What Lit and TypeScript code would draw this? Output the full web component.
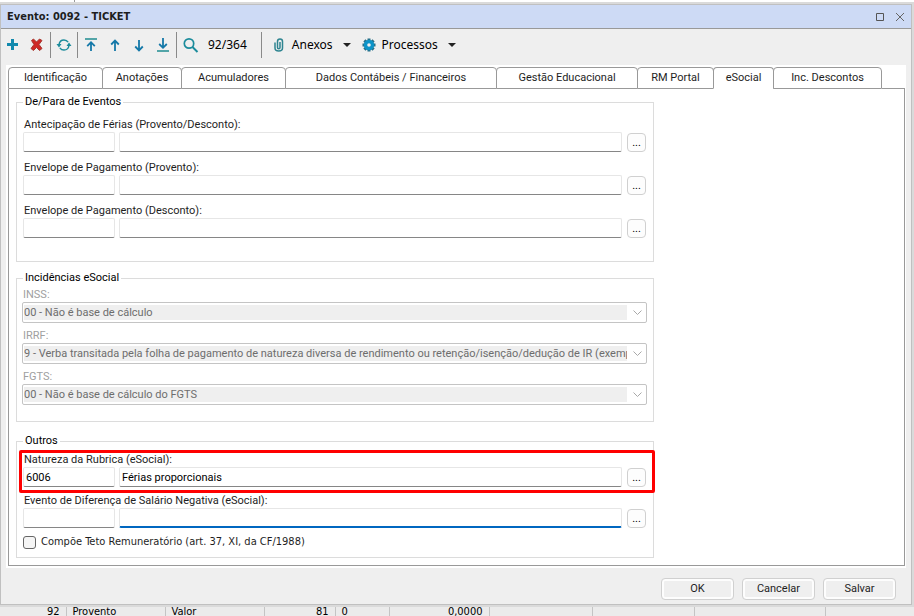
import { LitElement, html, css, svg } from "lit";
import { customElement } from "lit/decorators.js";

const icons = {
  add: svg`<path d="M6.5 1v11M1 6.5h11" stroke="#1289ad" stroke-width="3" fill="none"/>`,
  remove: svg`<path d="M1.5 2.5 3.5 1 6.5 4 9.5 1 12 2.5 9 6.5 12 10.5 9.5 12.5 6.5 9.5 3.5 12.5 1 10.5 4 6.5Z" fill="#cf2a27" stroke="#a83a32" stroke-width="1"/>`,
  refresh: svg`<path d="M2 6.5C2.500 3.500 4.500 2 7 2c1.700 0 3.200.8 4.100 2.200M12 7.500c-.5 3-2.500 4.500-5 4.500-1.700 0-3.200-.8-4.100-2.200" fill="none" stroke="#1c8c9c" stroke-width="1.500"/><path d="M-.5 6h5L2 9.500ZM9.500 8h5L12 4.500Z" fill="#1c8c9c"/>`,
  first: svg`<path d="M1 1h12" stroke="#2b9296" stroke-width="1.600"/><path d="M7 13V4.500M3.200 8.200 7 4.200l3.800 4" fill="none" stroke="#1478a8" stroke-width="1.800"/>`,
  up: svg`<path d="M7 13V3M3.200 6.500 7 2.600l3.800 3.900" fill="none" stroke="#1478a8" stroke-width="1.800"/>`,
  down: svg`<path d="M7 2v10M3.200 8.500 7 12.400l3.800-3.900" fill="none" stroke="#1478a8" stroke-width="1.800"/>`,
  last: svg`<path d="M1 13h12" stroke="#2b9296" stroke-width="1.600"/><path d="M7 0v9.500M3.200 6 7 9.800 10.800 6" fill="none" stroke="#1478a8" stroke-width="1.800"/>`,
  search: svg`<circle cx="6" cy="5.500" r="4.700" fill="none" stroke="#1c8c9c" stroke-width="1.700"/><path d="m9.500 9 5 5" stroke="#1c8c9c" stroke-width="2"/>`,
  clip: svg`<path d="M3 4.500V10c0 4 7.500 4 7.500 0V3.500c0-3.300-5-3.300-5 0V9.500c0 1.800 2.500 1.800 2.500 0V4" fill="none" stroke="#2f8591" stroke-width="1.500"/>`,
  gear: svg`<path d="M7 .5v13M.5 7h13M2.400 2.400l9.200 9.200M11.600 2.400l-9.200 9.200" stroke="#276f87" stroke-width="3"/><circle cx="7" cy="7" r="3.500" fill="#efefef" stroke="#0c93c8" stroke-width="3.400"/>`,
};

const icon = (name: keyof typeof icons) =>
  html`<svg class="icon" viewBox="0 0 14 14" aria-hidden="true">${icons[name]}</svg>`;

const tabs = [
  { label: "Identificação", cls: "t1" },
  { label: "Anotações", cls: "t2" },
  { label: "Acumuladores", cls: "t3" },
  { label: "Dados Contábeis / Financeiros", cls: "t4" },
  { label: "Gestão Educacional", cls: "t5" },
  { label: "RM Portal", cls: "t6" },
  { label: "eSocial", cls: "t7", active: true },
  { label: "Inc. Descontos", cls: "t8" },
];

@customElement("app-root")
export class AppRoot extends LitElement {
  static styles = css`
    :host {
      display: flex;
      flex-direction: column;
      min-height: 100vh;
      box-sizing: border-box;
      background: #dadada;
      font: 11px/14px Roboto, "Liberation Sans", sans-serif;
      color: #1e1e1e;
    }
    * { box-sizing: border-box; }
    button, input, select { font: inherit; color: inherit; margin: 0; }
    .above { height: 2px; background: #fff; display: flex; }
    .above::before { content: ""; width: 74px; border-right: 1px solid #999; }
    .window {
      margin: 2px 2px 0 0;
      border: 1px solid #c0c0c0;
      background: #efefef;
    }
    .title {
      display: flex;
      align-items: center;
      height: 24px;
      padding: 0 1px 0 6px;
      background: #cddaf5;
      border-bottom: 1px solid #999;
      font: bold 11px/14px "DejaVu Sans Condensed", "DejaVu Sans", sans-serif;
    }
    h1 { font: inherit; margin: 0; flex: 1; }
    .winbtn { width: 20px; height: 20px; padding: 0; border: 0; background: none; display: grid; place-items: center; }
    .winbtn svg { width: 10px; height: 10px; }
    .toolbar {
      display: flex;
      align-items: center;
      height: 36px;
      font: 12px/16px "Noto Sans", sans-serif;
      color: #000;
      padding: 0 0 4px;
    }
    .tool { height: 24px; width: 24px; padding: 0; border: 0; background: none; display: grid; place-items: center; }
    .menu { height: 24px; padding: 0 0 0 9px; border: 0; background: none; display: flex; align-items: center; gap: 6px; }
    .menu + .menu { padding-left: 11px; }
    .icon { width: 14px; height: 14px; overflow: visible; }
    .caret { width: 8px; height: 4px; margin-left: 4px; fill: #222; }
    .sep { width: 1px; height: 26px; background: #8a8a8a; margin: 0 1px; }
    .count { padding: 0 13px 0 6px; }
    .pages { background: #fff; margin: 0 5px; padding: 2px 1px 2px 2px; }
    .tabs { display: flex; }
    .tabs::after { content: ""; flex: 1; border-bottom: 1px solid #999; }
    .tab {
      height: 22px;
      padding: 0;
      border: 1px solid #999;
      border-radius: 4px 4px 0 0;
      background: #fff;
      margin-right: -1px;
      text-align: center;
    }
    .active { border-bottom-color: #fff; }
    .t1 { width: 95px; } .t2 { width: 80px; } .t3 { width: 105px; } .t4 { width: 212px; }
    .t5 { width: 142px; } .t6 { width: 77px; } .t7 { width: 61px; } .t8 { width: 109px; }
    .tabs::after { margin-left: 1px; }
    .panel { border: 1px solid #999; border-top: 0; padding: 6px 7px 7px; }
    fieldset {
      max-width: 638px;
      margin: 0 0 9px;
      padding: 9px 7px 0 6px;
      border: 1px solid #dcdcdc;
      min-width: 0;
    }
    legend { padding: 0 2px; margin: 0; color: #000; }
    .g1 { height: 167px; }
    .g2 { height: 151px; padding-top: 3px; margin-bottom: 12px; }
    .g3 { height: 124px; padding-top: 5px; margin-bottom: 0; }
    .field { display: grid; grid-template-columns: 92px 1fr 20px; column-gap: 4px; margin-bottom: 9px; }
    .field label { grid-column: 1 / -1; line-height: 14px; padding-left: 1px; }
    .g3 .field { margin-bottom: 7px; }
    .box {
      height: 20px;
      min-width: 0;
      width: 100%;
      padding: 0 2px;
      background: #fff;
      border: 1px solid #e6e6e6;
      border-bottom-color: #868686;
      border-radius: 2px;
      color: #000;
      outline: 0;
    }
    .focus { border-bottom: 2px solid #0067c0; }
    .more {
      width: 19px;
      height: 19px;
      justify-self: end;
      margin-top: 1px;
      padding: 0;
      border: 1px solid #d0d0d0;
      border-radius: 4px;
      background: #fdfdfd;
      color: #000;
    }
    .mark { position: relative; }
    .mark::after {
      content: "";
      position: absolute;
      inset: -3px -9px -6px -4px;
      border: 3px solid #f00;
      border-radius: 2px;
      pointer-events: none;
    }
    .choice { display: block; margin: 0 -1px 6px; color: #a0a0a0; }
    .choice label { display: block; padding-left: 1px; }
    .combo {
      display: flex;
      align-items: center;
      height: 21px;
      padding: 2px 2px 2px 1px;
      border: 1px solid #c4c4c4;
      border-radius: 2px;
      background: #fff;
    }
    .combo select {
      appearance: none;
      flex: 1;
      min-width: 0;
      height: 15px;
      padding: 0;
      border: 0;
      border-radius: 0;
      background: #efefef;
      color: #6d6d6d;
      opacity: 1;
    }
    .chev { width: 9px; height: 5px; margin: 0 2px 0 6px; fill: none; stroke: #a8a8a8; }
    .check { display: flex; align-items: center; gap: 5px; font: 11px/14px "DejaVu Sans Condensed", sans-serif; }
    .check input {
      appearance: none;
      width: 13px;
      height: 13px;
      border: 1px solid #666;
      border-radius: 3px;
      background: #f5f5f5;
    }
    .actions { display: flex; justify-content: flex-end; gap: 8px; padding: 10px 15px 4px; }
    .action {
      width: 73px;
      height: 22px;
      padding: 0;
      border: 1px solid #d0d0d0;
      border-radius: 4px;
      background: #efefef;
      box-shadow: inset 0 0 0 2px #fdfdfd;
    }
    table {
      margin-top: 2px;
      width: 100%;
      border-collapse: collapse;
      table-layout: fixed;
      background: #ebebeb;
      font: 11px/8px "DejaVu Sans Condensed", sans-serif;
      color: #000;
    }
    td { padding: 0 6px; height: 9px; border-right: 1px solid #c4c4c4; }
    td:last-child { border: 0; }
    .num { text-align: right; }
    .c1 { width: 66px; } .c2 { width: 99px; } .c3 { width: 99px; } .c4 { width: 71px; } .c5 { width: 54px; }
    .c6 { width: 100px; } .c7 { width: 103px; } .c8 { width: 102px; } .c9 { width: 131px; }
  `;

  private field(id: string, label: string, code = "", text = "", cls = "", focus = "") {
    return html`<div class="field ${cls}">
      <label for=${id}>${label}</label>
      <input class="box" id=${id} .value=${code} />
      <input class="box ${focus}" aria-label="${label} descrição" .value=${text} />
      <button class="more" aria-label="Procurar">...</button>
    </div>`;
  }

  private choice(id: string, label: string, value: string) {
    return html`<div class="choice">
      <label for=${id}>${label}</label>
      <div class="combo">
        <select id=${id} disabled><option>${value}</option></select>
        <svg class="chev" viewBox="0 0 9 5"><path d="m.5.5 4 4 4-4" /></svg>
      </div>
    </div>`;
  }

  private tool(name: keyof typeof icons, label: string) {
    return html`<button class="tool" aria-label=${label}>${icon(name)}</button>`;
  }

  render() {
    const caret = html`<svg class="caret" viewBox="0 0 8 4"><path d="M0 0h8L4 4Z" /></svg>`;
    return html`
      <div class="above"></div>
      <main class="window">
        <header class="title">
          <h1>Evento: 0092 - TICKET</h1>
          <button class="winbtn" aria-label="Maximizar"><svg viewBox="0 0 10 10"><path d="M1.500 1.500h7v7h-7Z" fill="none" stroke="#555"/></svg></button>
          <button class="winbtn" aria-label="Fechar"><svg viewBox="0 0 10 10"><path d="m1 1 8 8M9 1 1 9" stroke="#666" fill="none"/></svg></button>
        </header>
        <div class="toolbar">
          ${this.tool("add", "Incluir")}${this.tool("remove", "Excluir")}
          <span class="sep"></span>
          ${this.tool("refresh", "Atualizar")}
          <span class="sep"></span>
          ${this.tool("first", "Primeiro")}${this.tool("up", "Anterior")}${this.tool("down", "Próximo")}${this.tool("last", "Último")}
          <span class="sep"></span>
          ${this.tool("search", "Localizar")}
          <span class="count">92/364</span>
          <span class="sep"></span>
          <button class="menu">${icon("clip")}Anexos${caret}</button>
          <button class="menu">${icon("gear")}Processos${caret}</button>
        </div>
        <div class="pages">
          <div class="tabs" role="tablist">
            ${tabs.map(
              (t) => html`<button role="tab" aria-selected=${t.active ? "true" : "false"} class="tab ${t.cls} ${t.active ? "active" : ""}">${t.label}</button>`
            )}
          </div>
          <div class="panel">
            <fieldset class="g1">
              <legend>De/Para de Eventos</legend>
              ${this.field("ferias", "Antecipação de Férias (Provento/Desconto):")}
              ${this.field("provento", "Envelope de Pagamento (Provento):")}
              ${this.field("desconto", "Envelope de Pagamento (Desconto):")}
            </fieldset>
            <fieldset class="g2">
              <legend>Incidências eSocial</legend>
              ${this.choice("inss", "INSS:", "00 - Não é base de cálculo")}
              ${this.choice("irrf", "IRRF:", "9 - Verba transitada pela folha de pagamento de natureza diversa de rendimento ou retenção/isenção/dedução de IR (exemp")}
              ${this.choice("fgts", "FGTS:", "00 - Não é base de cálculo do FGTS")}
            </fieldset>
            <fieldset class="g3">
              <legend>Outros</legend>
              ${this.field("rubrica", "Natureza da Rubrica (eSocial):", "6006", "Férias proporcionais", "mark")}
              ${this.field("diferenca", "Evento de Diferença de Salário Negativa (eSocial):", "", "", "", "focus")}
              <label class="check"><input type="checkbox" />Compõe Teto Remuneratório (art. 37, XI, da CF/1988)</label>
            </fieldset>
          </div>
        </div>
        <footer class="actions">
          <button class="action">OK</button>
          <button class="action">Cancelar</button>
          <button class="action">Salvar</button>
        </footer>
      </main>
      <table>
        <tr>
          <td class="c1 num">92</td><td class="c2">Provento</td><td class="c3">Valor</td>
          <td class="c4 num">81</td><td class="c5">0</td><td class="c6 num">0,0000</td>
          <td class="c7"></td><td class="c8"></td><td class="c9"></td><td></td>
        </tr>
      </table>
    `;
  }
}
